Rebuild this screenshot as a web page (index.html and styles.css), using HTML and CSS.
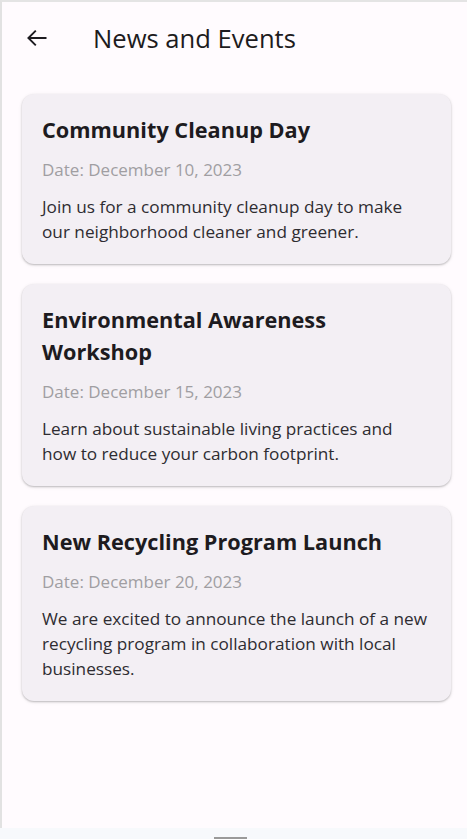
FILE: index.html
```html
<!DOCTYPE html>
<html>
<head>
<meta charset="utf-8">
<link rel="stylesheet" href="styles.css">
</head>
<body>
<div class="screen">
  <header class="appbar">
    <button class="back" aria-label="Back">
      <svg viewBox="0 0 24 24" width="24" height="24"><path d="M21.5 12H3.6 M10.8 4.6 3.4 12l7.4 7.4" fill="none" stroke="#1d1b20" stroke-width="1.9"/></svg>
    </button>
    <h1 class="title">News and Events</h1>
  </header>
  <main class="list">
    <article class="card">
      <h2 class="card-title">Community Cleanup Day</h2>
      <p class="card-date">Date: December 10, 2023</p>
      <p class="card-body">Join us for a community cleanup day to make our neighborhood cleaner and greener.</p>
    </article>
    <article class="card">
      <h2 class="card-title">Environmental Awareness Workshop</h2>
      <p class="card-date">Date: December 15, 2023</p>
      <p class="card-body">Learn about sustainable living practices and how to reduce your carbon footprint.</p>
    </article>
    <article class="card">
      <h2 class="card-title">New Recycling Program Launch</h2>
      <p class="card-date">Date: December 20, 2023</p>
      <p class="card-body">We are excited to announce the launch of a new recycling program in collaboration with local businesses.</p>
    </article>
  </main>
</div>
<div class="bottom"><span class="handle"></span></div>
</body>
</html>
```
FILE: styles.css
```css
html, body {
  margin: 0;
  padding: 0;
  background: #f7f9fc;
}
body {
  font-family: "Open Sans", "Noto Sans", sans-serif;
  color: #1d1b20;
  width: 467px;
  height: 839px;
  overflow: hidden;
}
.screen {
  box-sizing: border-box;
  height: 828px;
  background: #fffbfe;
  border-top: 2px solid #e4e4e4;
  border-left: 2px solid #e2e2e2;
}
.appbar {
  display: flex;
  align-items: center;
  height: 72px;
  padding-left: 23px;
}
.back {
  display: flex;
  align-items: center;
  justify-content: center;
  width: 24px;
  height: 24px;
  padding: 0;
  border: 0;
  background: none;
}
.title {
  margin: 0 0 0 44px;
  font-size: 25.6px;
  font-weight: 400;
  color: #1d1b20;
}
.list {
  display: flex;
  flex-direction: column;
  gap: 20px;
  padding: 20px 16px 0 20px;
}
.card {
  background: #f3eff4;
  border-radius: 12px;
  padding: 20px;
  box-shadow: 0 1px 2px rgba(0,0,0,0.22), 0 1px 4px rgba(0,0,0,0.08);
}
.card-title {
  margin: 0;
  font-size: 21.7px;
  line-height: 32px;
  font-weight: 700;
  color: #1d1b20;
}
.card-date {
  margin: 12px 0 0;
  font-size: 17px;
  line-height: 24px;
  color: #a09ea2;
}
.card-body {
  margin: 12px 0 0;
  font-size: 17.2px;
  line-height: 25px;
  color: #2e2c31;
}
.bottom {
  height: 11px;
  display: flex;
  justify-content: center;
  align-items: flex-end;
}
.handle {
  width: 33px;
  height: 2px;
  background: #9a9a9a;
  margin-left: -6px;
}
```
